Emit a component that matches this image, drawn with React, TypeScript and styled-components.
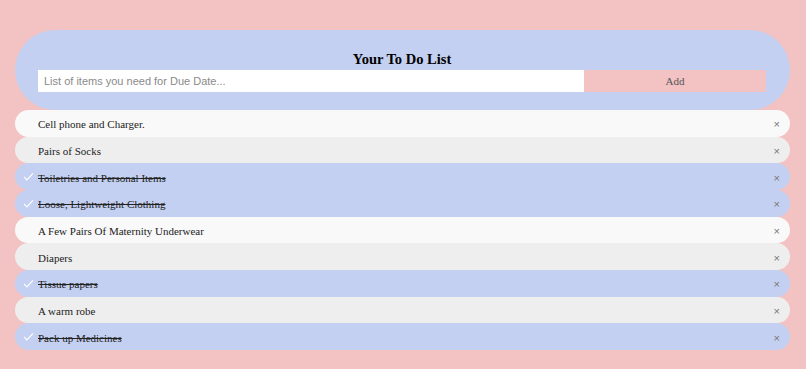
import React, { useState } from 'react';
import styled, { createGlobalStyle } from 'styled-components';

const GlobalStyle = createGlobalStyle`
  html, body {
    margin: 0;
    padding: 0;
    background: #f3c2c2;
    font-family: "Liberation Serif", "Times New Roman", serif;
  }
`;

interface Item {
  text: string;
  done: boolean;
}

const initialItems: Item[] = [
  { text: 'Cell phone and Charger.', done: false },
  { text: 'Pairs of Socks', done: false },
  { text: 'Toiletries and Personal Items', done: true },
  { text: 'Loose, Lightweight Clothing', done: true },
  { text: 'A Few Pairs Of Maternity Underwear', done: false },
  { text: 'Diapers', done: false },
  { text: 'Tissue papers', done: true },
  { text: 'A warm robe', done: false },
  { text: 'Pack up Medicines', done: true },
];

export default function App() {
  const [items, setItems] = useState<Item[]>(initialItems);
  const [value, setValue] = useState('');

  const add = () => {
    if (!value.trim()) return;
    setItems([...items, { text: value, done: false }]);
    setValue('');
  };

  const toggle = (i: number) =>
    setItems(items.map((it, idx) => (idx === i ? { ...it, done: !it.done } : it)));

  const remove = (i: number) => setItems(items.filter((_, idx) => idx !== i));

  return (
    <>
      <GlobalStyle />
      <S.Page>
        <S.Header>
          <S.Title>Your To Do List</S.Title>
          <S.Form>
            <S.Input
              value={value}
              onChange={(e) => setValue(e.target.value)}
              placeholder="List of items you need for Due Date..."
            />
            <S.AddButton onClick={add}>Add</S.AddButton>
          </S.Form>
        </S.Header>
        <S.List>
          {items.map((it, i) => (
            <S.Row key={i} $done={it.done} $odd={i % 2 === 0} onClick={() => toggle(i)}>
              {it.done && (
                <S.Check viewBox="0 0 12 10">
                  <polyline points="1,5.5 4.2,8.7 11,1.5" fill="none" stroke="#fff" strokeWidth="1.3" />
                </S.Check>
              )}
              <S.Label $done={it.done}>{it.text}</S.Label>
              <S.Close
                onClick={(e) => {
                  e.stopPropagation();
                  remove(i);
                }}
              >
                ×
              </S.Close>
            </S.Row>
          ))}
        </S.List>
      </S.Page>
    </>
  );
}

const S = {
  Page: styled.div`
    padding: 30px 16px 0 15px;
  `,
  Header: styled.div`
    background: #c4d0f2;
    border-radius: 40px;
    padding: 21px 24px 18px 23px;
    text-align: center;
  `,
  Title: styled.h2`
    margin: 0 0 3px;
    font-size: 14.5px;
    line-height: 16px;
    font-weight: bold;
    color: #000;
  `,
  Form: styled.div`
    display: flex;
  `,
  Input: styled.input`
    flex: 0 0 546px;
    box-sizing: border-box;
    height: 22px;
    border: none;
    padding: 0 6px;
    font-family: "Liberation Sans", Arial, sans-serif;
    font-size: 11px;
    color: #333;
    background: #fff;
    outline: none;
    &::placeholder {
      color: #8a8a8a;
    }
  `,
  AddButton: styled.button`
    flex: 0 0 182px;
    height: 22px;
    border: none;
    background: #f3c2c2;
    color: #555;
    font-family: "Liberation Serif", "Times New Roman", serif;
    font-size: 11px;
    cursor: pointer;
  `,
  List: styled.ul`
    list-style: none;
    margin: 0;
    padding: 0;
  `,
  Row: styled.li<{ $done: boolean; $odd: boolean }>`
    position: relative;
    display: flex;
    align-items: center;
    box-sizing: border-box;
    height: 26.67px;
    padding: 2px 10px 0 23px;
    border-radius: 14px;
    background: ${(p) => (p.$done ? '#c4d0f2' : p.$odd ? '#f9f9f9' : '#eeeeee')};
    cursor: pointer;
  `,
  Check: styled.svg`
    position: absolute;
    left: 8px;
    top: 9px;
    width: 11px;
    height: 9px;
  `,
  Label: styled.span<{ $done: boolean }>`
    flex: 1;
    font-size: 11px;
    color: #222;
    text-decoration: ${(p) => (p.$done ? 'line-through' : 'none')};
  `,
  Close: styled.span`
    font-family: "Liberation Sans", Arial, sans-serif;
    font-size: 11px;
    color: #777;
  `,
};
